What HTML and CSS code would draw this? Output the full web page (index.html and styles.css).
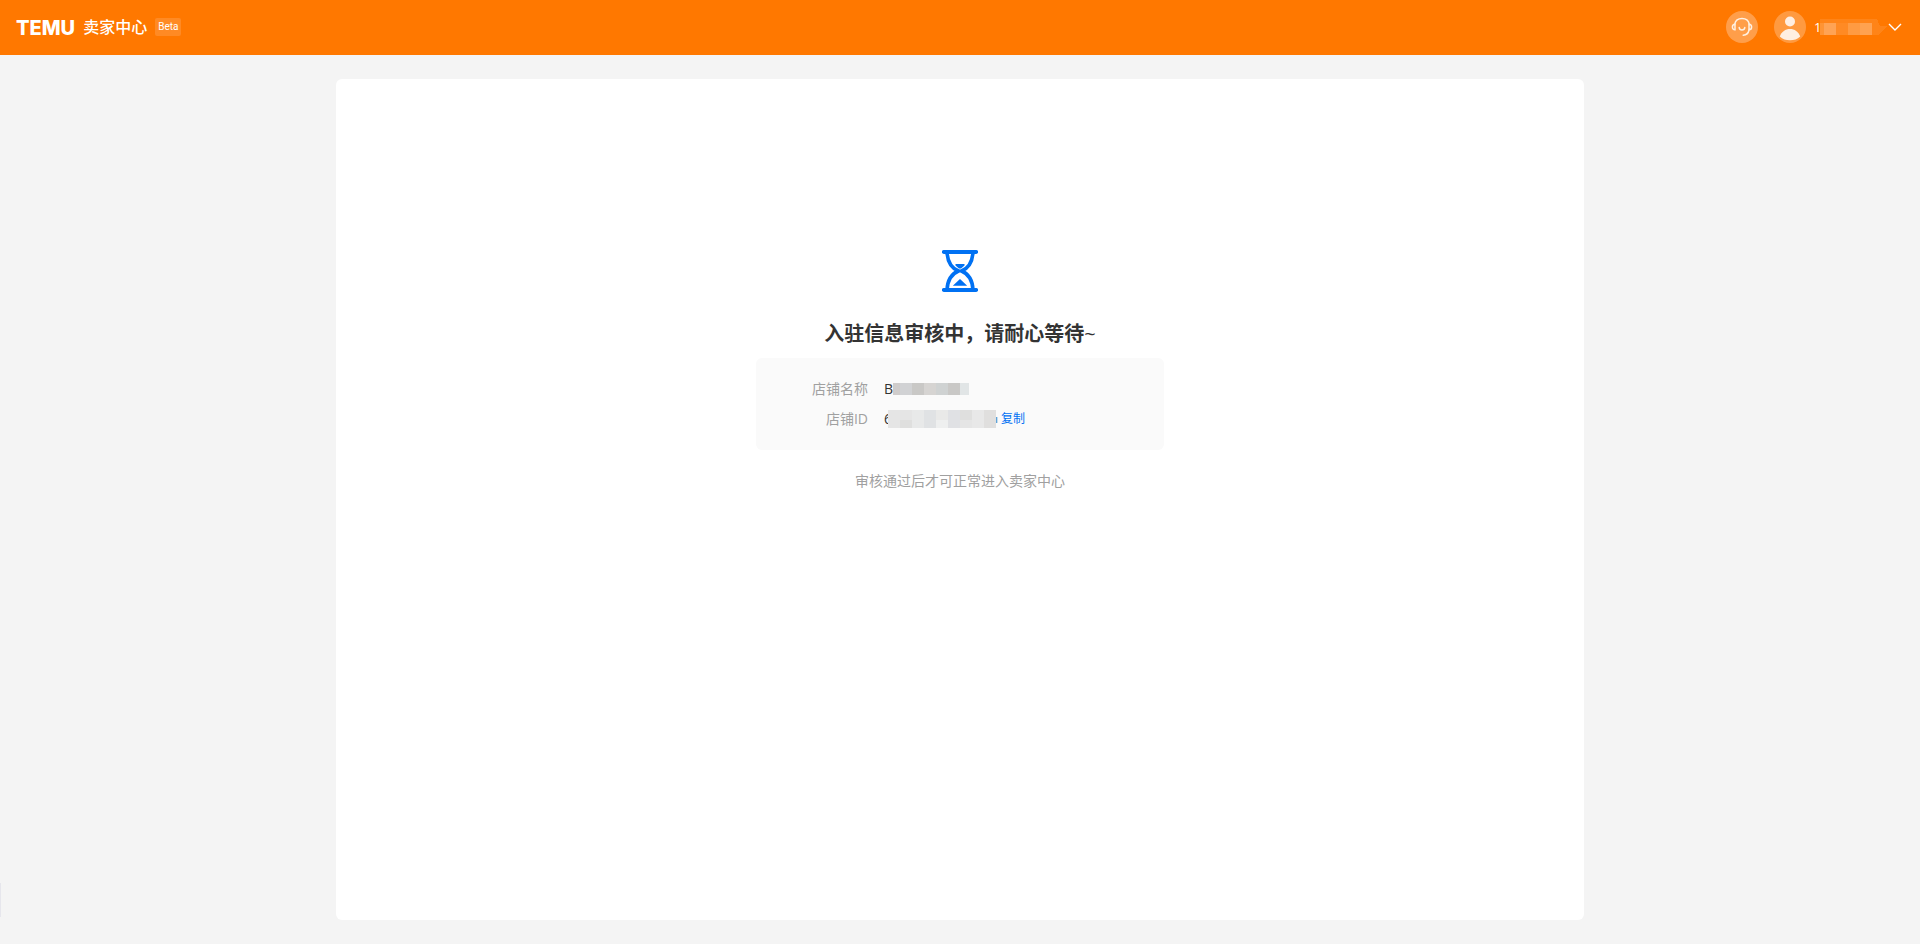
FILE: index.html
```html
<!DOCTYPE html>
<html lang="zh-CN">
<head>
<meta charset="utf-8">
<meta name="viewport" content="width=device-width, initial-scale=1">
<title>TEMU 卖家中心</title>
<link rel="stylesheet" href="styles.css">
</head>
<body>
<header class="topbar">
  <a class="brand" href="#">
    <span class="brand-logo">TEMU</span>
    <span class="brand-name">卖家中心</span>
    <span class="brand-tag">Beta</span>
  </a>
  <div class="actions">
    <button class="round-button" type="button" aria-label="客服">
      <svg width="32" height="32" viewBox="0 0 32 32" fill="none" stroke="#fff0e2" stroke-width="1.5" stroke-linecap="round">
        <path d="M8.800 13C9.400 9.800 12.300 7.600 16 7.600S22.600 9.800 23.200 13"/>
        <path d="M9 13.200V18.800C7.400 18.800 6.400 17.600 6.400 16S7.400 13.200 9 13.200Z"/>
        <path d="M23 13.200V18.800C24.600 18.800 25.600 17.600 25.600 16S24.600 13.200 23 13.200Z"/>
        <path d="M23 19C22.400 22.200 20.200 24 17.200 24.200"/>
        <path d="M13.200 16.600C13.600 19.800 18.400 19.800 18.800 16.600"/>
      </svg>
    </button>
    <button class="account" type="button" aria-label="账号">
      <svg width="32" height="32" viewBox="0 0 32 32">
        <circle cx="16" cy="16" r="16" fill="#ff9a40"/>
        <circle cx="16" cy="10.500" r="5" fill="#ffefe2"/>
        <path d="M5.800 25.400C7.600 20.600 11.400 18 16 18s8.400 2.600 10.200 7.400C23.500 28 20 29.200 16 29.200S8.500 28 5.800 25.400Z" fill="#ffefe2"/>
      </svg>
      <span class="account-name">1</span>
      <svg width="67" height="16" viewBox="0 0 67 16" shape-rendering="crispEdges">
        <path d="M0 0H57L60 7H67L59 16H0Z" fill="#ff8418"/>
        <path d="M0 4H4V16H0Z" fill="#ff9434"/>
        <path d="M4 4H16V16H4Z" fill="#ffa354"/>
        <path d="M16 4H28V16H16Z" fill="#ff8a24"/>
        <path d="M28 4H40V16H28Z" fill="#ff9b42"/>
        <path d="M40 4H52V16H40Z" fill="#ffa250"/>
      </svg>
      <svg class="chevron" width="14" height="10" viewBox="0 0 14 10" fill="none" stroke="#fff" stroke-width="1.400">
        <path d="M1 2L7 8L13 2"/>
      </svg>
    </button>
  </div>
</header>
<main class="page">
  <section class="panel">
    <svg width="36" height="42" viewBox="0 0 36 42" fill="none" stroke="#0071f3">
      <path d="M1.800 2H34.200M1.800 40H34.200" stroke-width="3.800" stroke-linecap="round"/>
      <path d="M5 2C5.500 12 9 18 16.500 21C9 24 5.500 30 5 40M31 2C30.500 12 27 18 19.500 21C27 24 30.500 30 31 40" stroke-width="3.600"/>
      <path d="M13.500 14H22.500V15.500L19 18.500H17L13.500 15.500ZM18 29L25.200 35.700H10.800Z" fill="#0071f3" stroke="none"/>
    </svg>
    <h1 class="title">入驻信息审核中，请耐心等待<span class="tilde">~</span></h1>
    <dl class="info">
      <dt>店铺名称</dt>
      <dd>
        <span>B</span>
        <svg width="76" height="12" viewBox="0 0 76 12" shape-rendering="crispEdges">
          <path d="M0 0H7V12H0Z" fill="#cfcccb"/>
          <path d="M7 0H19V12H7Z" fill="#d1d2d4"/>
          <path d="M19 0H31V12H19Z" fill="#c9c8c6"/>
          <path d="M31 0H43V12H31Z" fill="#d6d4d2"/>
          <path d="M43 0H55V12H43Z" fill="#cfd2d2"/>
          <path d="M55 0H67V12H55Z" fill="#c9c8c6"/>
          <path d="M67 0H76V12H67Z" fill="#e1e5e6"/>
        </svg>
      </dd>
      <dt>店铺ID</dt>
      <dd>
        <span>6</span>
        <svg class="mask-id" width="110" height="18" viewBox="0 0 110 18" shape-rendering="crispEdges">
          <path d="M0 0H108V18H0Z" fill="#e5e5e5"/>
          <path d="M12 10H24V18H12Z" fill="#dfdfde"/>
          <path d="M24 0H36V18H24Z" fill="#e8e9e9"/>
          <path d="M36 0H48V18H36Z" fill="#e0e2e4"/>
          <path d="M48 0H60V10H48Z" fill="#e9e9e8"/>
          <path d="M48 10H60V18H48Z" fill="#eeefef"/>
          <path d="M60 0H72V18H60Z" fill="#e0e1e4"/>
          <path d="M72 0H84V10H72Z" fill="#dfdfde"/>
          <path d="M84 0H96V18H84Z" fill="#e8e8e8"/>
          <path d="M96 0H108V18H96Z" fill="#e0dfde"/>
          <path d="M108 7H109V13H108Z" fill="#5fa3d8"/>
          <path d="M109 7H110V13H109Z" fill="#c3dcee"/>
        </svg>
        <button class="copy" type="button">复制</button>
      </dd>
    </dl>
    <p class="hint">审核通过后才可正常进入卖家中心</p>
  </section>
  <span class="side-handle"></span>
</main>
</body>
</html>
```
FILE: styles.css
```css
* {
  box-sizing: border-box;
}

body {
  display: flex;
  flex-direction: column;
  min-height: 100vh;
  margin: 0;
  padding-bottom: 5px;
  background: #fff;
  color: #333;
  font-family: "Open Sans", "Noto Sans CJK SC", sans-serif;
  font-size: 14px;
}

button {
  padding: 0;
  border: 0;
  background: none;
  color: inherit;
  font: inherit;
  cursor: pointer;
}

svg {
  display: block;
  flex: none;
}

.topbar {
  display: flex;
  align-items: center;
  justify-content: space-between;
  height: 55px;
  padding: 0 18px 1px 16px;
  background: #ff7800;
  color: #fff;
}

.brand {
  display: flex;
  align-items: center;
  gap: 8px;
  color: inherit;
  line-height: 18px;
  text-decoration: none;
}

.brand-logo {
  padding-top: 2px;
  font-family: Inter, sans-serif;
  font-size: 20px;
  font-weight: 800;
}

.brand-name {
  font-size: 16px;
  font-weight: 500;
}

.brand-tag {
  padding: 0 3px;
  border-radius: 2px;
  background: #ff8a24;
  font-family: Roboto, sans-serif;
  font-size: 10px;
}

.actions,
.account {
  display: flex;
  align-items: center;
}

.actions {
  gap: 16px;
}

.round-button {
  border-radius: 50%;
  background: #ff9e4a;
}

.account-name {
  width: 6px;
  margin-left: 8px;
  font-size: 13px;
}

.chevron {
  margin-left: 1px;
}

.page {
  position: relative;
  display: flex;
  flex: 1;
  justify-content: center;
  padding: 24px;
  background: #f4f4f4;
}

.panel {
  display: flex;
  flex-direction: column;
  align-items: center;
  width: 65vw;
  padding-top: 171px;
  border-radius: 6px;
  background: #fff;
}

.title {
  margin: 27px 0 9px;
  font-size: 20px;
  font-weight: 700;
  line-height: 30px;
}

.tilde {
  font-weight: 400;
}

.info {
  display: grid;
  grid-template-columns: 112px 1fr;
  gap: 10px 16px;
  width: 408px;
  max-width: 100%;
  margin: 0;
  padding: 21px 0;
  border-radius: 6px;
  background: #fafafa;
  line-height: 20px;
}

.info dt {
  color: #a0a0a0;
  text-align: right;
}

.info dd {
  display: flex;
  align-items: center;
  height: 20px;
  margin: 0;
}

.mask-id {
  margin-left: -4px;
}

.copy {
  margin-left: 3px;
  color: #0071f3;
  font-size: 12px;
}

.hint {
  margin: 21px 0 0;
  color: #a0a0a0;
  line-height: 20px;
}

.side-handle {
  position: absolute;
  bottom: 27px;
  left: 0;
  width: 1px;
  height: 34px;
  background: #e6e6ec;
}
```
